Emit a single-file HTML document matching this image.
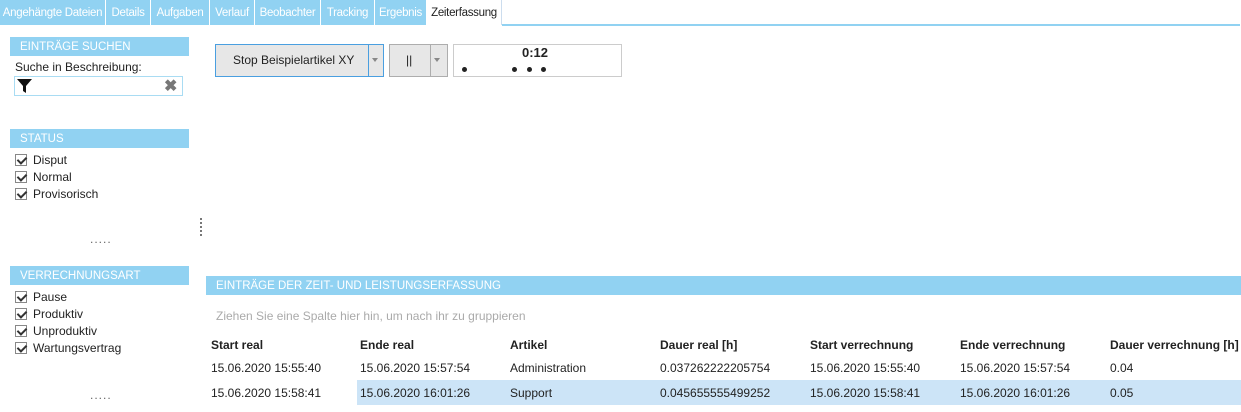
<!DOCTYPE html>
<html><head><meta charset="utf-8"><style>
*{margin:0;padding:0;box-sizing:border-box}
body{width:1241px;height:412px;background:#fff;font-family:"Liberation Sans",sans-serif;font-size:12px;color:#222;position:relative;overflow:hidden}
.a{position:absolute;white-space:nowrap}
.tab{position:absolute;top:0;height:25px;background:#91d2f2;color:#fff;line-height:27px;text-align:center;font-size:11.5px;white-space:nowrap;overflow:hidden;letter-spacing:-0.3px}
.hdr{position:absolute;background:#91d2f2;color:#fff;height:19px;line-height:20px;padding-left:10px;font-size:11.5px;white-space:nowrap}
.cb{position:absolute;width:12px;height:12px;border:1px solid #888;background:#fff}
.cb:after{content:"";position:absolute;left:3px;top:0px;width:4px;height:7px;border:solid #333;border-width:0 2px 2px 0;transform:rotate(45deg)}
.lbl{position:absolute;font-size:12px;white-space:nowrap}
.b{font-weight:bold}
</style></head><body>
<div class="tab" style="left:0;width:105px">Angehängte Dateien</div>
<div class="tab" style="left:106px;width:44px">Details</div>
<div class="tab" style="left:151px;width:58px">Aufgaben</div>
<div class="tab" style="left:210px;width:44px">Verlauf</div>
<div class="tab" style="left:255px;width:65px">Beobachter</div>
<div class="tab" style="left:321px;width:53px">Tracking</div>
<div class="tab" style="left:375px;width:51px">Ergebnis</div>
<div class="tab" style="left:427px;width:75px;background:#fff;color:#222;border-right:1px solid #cde">Zeiterfassung</div>
<div class="a" style="left:502px;top:24px;width:738px;height:2px;background:#91d2f2"></div>

<div class="hdr" style="left:10px;top:37px;width:179px">EINTRÄGE SUCHEN</div>
<div class="lbl" style="left:15px;top:60px">Suche in Beschreibung:</div>
<div class="a" style="left:14px;top:76px;width:169px;height:20px;border:1px solid #a9dcf3"></div>
<svg class="a" style="left:17px;top:79px" width="15" height="14" viewBox="0 0 15 14"><path d="M0 0H15L9 7V14L6 12V7Z" fill="#111"/></svg>
<div class="a" style="left:164px;top:76px;font-size:16px;color:#777;font-weight:bold">✖</div>

<div class="hdr" style="left:10px;top:129px;width:179px">STATUS</div>
<div class="cb" style="left:15px;top:154px"></div><div class="lbl" style="left:33px;top:153px">Disput</div>
<div class="cb" style="left:15px;top:171px"></div><div class="lbl" style="left:33px;top:170px">Normal</div>
<div class="cb" style="left:15px;top:188px"></div><div class="lbl" style="left:33px;top:187px">Provisorisch</div>
<div class="lbl" style="left:90px;top:232px;color:#666;letter-spacing:1px">.....</div>
<div class="a" style="left:200px;top:218px;width:2px;height:18px;border-left:2px dotted #777"></div>

<div class="hdr" style="left:10px;top:266px;width:179px">VERRECHNUNGSART</div>
<div class="cb" style="left:15px;top:291px"></div><div class="lbl" style="left:33px;top:290px">Pause</div>
<div class="cb" style="left:15px;top:308px"></div><div class="lbl" style="left:33px;top:307px">Produktiv</div>
<div class="cb" style="left:15px;top:325px"></div><div class="lbl" style="left:33px;top:324px">Unproduktiv</div>
<div class="cb" style="left:15px;top:342px"></div><div class="lbl" style="left:33px;top:341px">Wartungsvertrag</div>
<div class="lbl" style="left:90px;top:388px;color:#666;letter-spacing:1px">.....</div>

<div class="a" style="left:215px;top:44px;width:169px;height:33px;border:1px solid #4a9fe0;background:#e7e7e7"></div>
<div class="a" style="left:368px;top:45px;width:1px;height:31px;background:#4a9fe0"></div>
<div class="lbl" style="left:233px;top:53px">Stop Beispielartikel XY</div>
<div class="a" style="left:372px;top:58px;border:3px solid transparent;border-top:4px solid #888"></div>
<div class="a" style="left:389px;top:44px;width:59px;height:33px;border:1px solid #adadad;background:#e7e7e7"></div>
<div class="a" style="left:430px;top:45px;width:1px;height:31px;background:#adadad"></div>
<div class="lbl" style="left:406px;top:53px">||</div>
<div class="a" style="left:434px;top:58px;border:3px solid transparent;border-top:4px solid #888"></div>
<div class="a" style="left:453px;top:44px;width:169px;height:33px;border:1px solid #ccc"></div>
<div class="lbl b" style="left:522px;top:45px;font-size:13px">0:12</div>
<div class="a" style="left:462px;top:67px;width:5px;height:5px;border-radius:50%;background:#222"></div>
<div class="a" style="left:512px;top:67px;width:5px;height:5px;border-radius:50%;background:#222"></div>
<div class="a" style="left:527px;top:67px;width:5px;height:5px;border-radius:50%;background:#222"></div>
<div class="a" style="left:541px;top:67px;width:5px;height:5px;border-radius:50%;background:#222"></div>

<div class="hdr" style="left:206px;top:276px;width:1035px">EINTRÄGE DER ZEIT- UND LEISTUNGSERFASSUNG</div>
<div class="lbl" style="left:216px;top:309px;color:#aaa">Ziehen Sie eine Spalte hier hin, um nach ihr zu gruppieren</div>

<div class="a" style="left:357px;top:380px;width:884px;height:25px;background:#cce4f7"></div>
<div class="lbl b" style="left:211px;top:338px">Start real</div>
<div class="lbl b" style="left:360px;top:338px">Ende real</div>
<div class="lbl b" style="left:510px;top:338px">Artikel</div>
<div class="lbl b" style="left:660px;top:338px">Dauer real [h]</div>
<div class="lbl b" style="left:810px;top:338px">Start verrechnung</div>
<div class="lbl b" style="left:960px;top:338px">Ende verrechnung</div>
<div class="lbl b" style="left:1110px;top:338px">Dauer verrechnung [h]</div>

<div class="lbl" style="left:211px;top:361px">15.06.2020 15:55:40</div>
<div class="lbl" style="left:360px;top:361px">15.06.2020 15:57:54</div>
<div class="lbl" style="left:510px;top:361px">Administration</div>
<div class="lbl" style="left:660px;top:361px">0.037262222205754</div>
<div class="lbl" style="left:810px;top:361px">15.06.2020 15:55:40</div>
<div class="lbl" style="left:960px;top:361px">15.06.2020 15:57:54</div>
<div class="lbl" style="left:1110px;top:361px">0.04</div>

<div class="lbl" style="left:211px;top:386px">15.06.2020 15:58:41</div>
<div class="lbl" style="left:360px;top:386px">15.06.2020 16:01:26</div>
<div class="lbl" style="left:510px;top:386px">Support</div>
<div class="lbl" style="left:660px;top:386px">0.045655555499252</div>
<div class="lbl" style="left:810px;top:386px">15.06.2020 15:58:41</div>
<div class="lbl" style="left:960px;top:386px">15.06.2020 16:01:26</div>
<div class="lbl" style="left:1110px;top:386px">0.05</div>
</body></html>
